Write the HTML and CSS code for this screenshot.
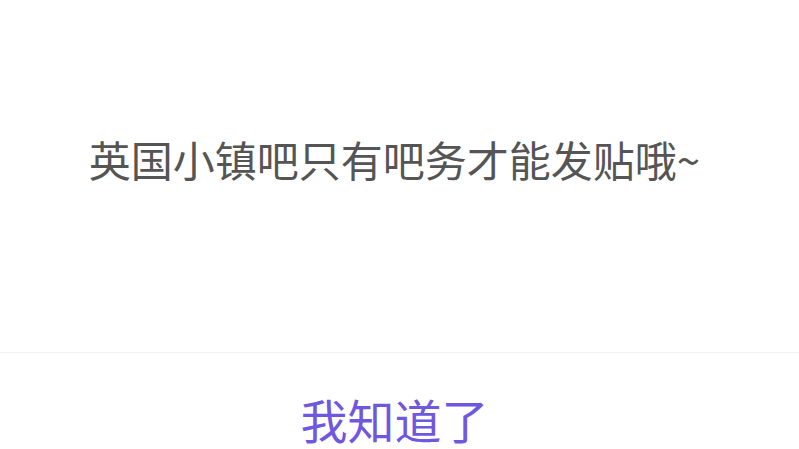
FILE: index.html
```html
<!DOCTYPE html>
<html lang="zh">
<head>
<meta charset="utf-8">
<link rel="stylesheet" href="styles.css">
</head>
<body>
<div class="dialog">
  <div class="message">英国小镇吧只有吧务才能发贴哦~</div>
  <div class="actions"><span class="btn">我知道了</span></div>
</div>
</body>
</html>
```
FILE: styles.css
```css
html, body {
  margin: 0;
  padding: 0;
  background: #fff;
  overflow: hidden;
}
.dialog {
  width: 799px;
  height: 449px;
  display: flex;
  flex-direction: column;
  font-family: "Noto Sans CJK SC", "Noto Sans", sans-serif;
}
.message {
  height: 352px;
  flex: none;
  display: flex;
  align-items: center;
  justify-content: center;
  padding: 0 10px 35px 0;
  box-sizing: border-box;
  color: #555;
  font-size: 42px;
  line-height: 1;
}
.actions {
  flex: none;
  height: 97px;
  box-sizing: border-box;
  padding: 34px 10px 0 0;
  border-top: 1px solid #efefef;
  display: flex;
  align-items: center;
  justify-content: center;
}
.btn {
  color: #7057e0;
  font-size: 47px;
  line-height: 1;
}
```
